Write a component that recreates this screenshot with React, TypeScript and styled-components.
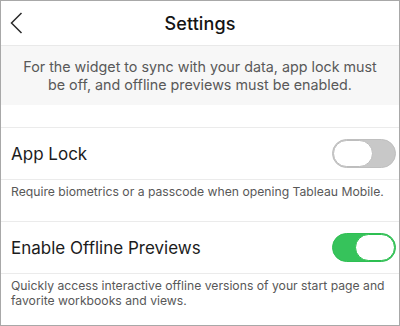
import React from "react";
import styled, { createGlobalStyle } from "styled-components";

const Global = createGlobalStyle`
  html, body { margin: 0; padding: 0; background: #ffffff; }
  body { font-family: "Inter", "Noto Sans", sans-serif; -webkit-font-smoothing: antialiased; }
`;

const Frame = styled.div`
  width: 400px;
  height: 326px;
  box-sizing: border-box;
  border: 1px solid #a8a8a8;
  overflow: hidden;
  background: #ffffff;
  display: flex;
  flex-direction: column;
`;

const Header = styled.header`
  height: 44px;
  flex: none;
  border-bottom: 1px solid #e9e9e9;
  display: grid;
  grid-template-columns: 44px 1fr 44px;
  align-items: center;
`;

const BackButton = styled.button`
  border: 0;
  background: none;
  padding: 0 0 0 8px;
  height: 44px;
  display: flex;
  align-items: center;
  cursor: pointer;
`;

const Title = styled.h1`
  margin: 0;
  text-align: center;
  font-size: 18px;
  font-weight: 500;
  color: #141414;
  letter-spacing: 0.1px;
`;

const Info = styled.div`
  flex: none;
  height: 59px;
  box-sizing: border-box;
  padding-top: 12px;
  background: #f7f7f7;
  text-align: center;
  font-size: 14.3px;
  line-height: 18px;
  color: #595959;
  white-space: nowrap;
`;

const Spacer = styled.div`
  flex: none;
  height: 22px;
`;

const Row = styled.div`
  flex: none;
  height: 51px;
  border-top: 1px solid #ebebeb;
  display: flex;
  align-items: center;
  justify-content: space-between;
  padding: 0 3px 0 10px;
`;

const Label = styled.span`
  font-size: 17px;
  color: #1c1c1c;
`;

const Desc = styled.p<{ $h: number }>`
  margin: 0;
  flex: none;
  height: ${(p) => p.$h}px;
  box-sizing: border-box;
  border-top: 1px solid #ebebeb;
  padding: 5px 8px 0 10px;
  font-size: 12.2px;
  line-height: 14.5px;
  color: #585858;
  white-space: nowrap;
`;

const Track = styled.div<{ $on: boolean }>`
  width: 64px;
  height: 29px;
  box-sizing: border-box;
  border-radius: 15px;
  display: flex;
  justify-content: ${(p) => (p.$on ? "flex-end" : "flex-start")};
  background: ${(p) => (p.$on ? "#36c35b" : "#c8c8c8")};
  border: 1px solid ${(p) => (p.$on ? "#2fbf53" : "#bfbfbf")};
`;

const Knob = styled.div<{ $on: boolean }>`
  width: 40px;
  height: 100%;
  box-sizing: border-box;
  border-radius: 14px;
  background: #ffffff;
  border: 1.5px solid ${(p) => (p.$on ? "#2cbf50" : "#bdbdbd")};
`;

const Switch = ({ on }: { on: boolean }) => (
  <Track $on={on}>
    <Knob $on={on} />
  </Track>
);

export default function App() {
  return (
    <>
      <Global />
      <Frame>
        <Header>
          <BackButton aria-label="Back">
            <svg width="14" height="22" viewBox="0 0 14 22">
              <polyline points="12.5,1 2.5,11 12.5,21" fill="none" stroke="#2a2a2a" strokeWidth="1.5" />
            </svg>
          </BackButton>
          <Title>Settings</Title>
          <span />
        </Header>
        <Info>
          For the widget to sync with your data, app lock must
          <br />
          be off, and offline previews must be enabled.
        </Info>
        <Spacer />
        <Row>
          <Label>App Lock</Label>
          <Switch on={false} />
        </Row>
        <Desc $h={42}>Require biometrics or a passcode when opening Tableau Mobile.</Desc>
        <Row>
          <Label>Enable Offline Previews</Label>
          <Switch on={true} />
        </Row>
        <Desc $h={60}>
          Quickly access interactive offline versions of your start page and
          <br />
          favorite workbooks and views.
        </Desc>
      </Frame>
    </>
  );
}
